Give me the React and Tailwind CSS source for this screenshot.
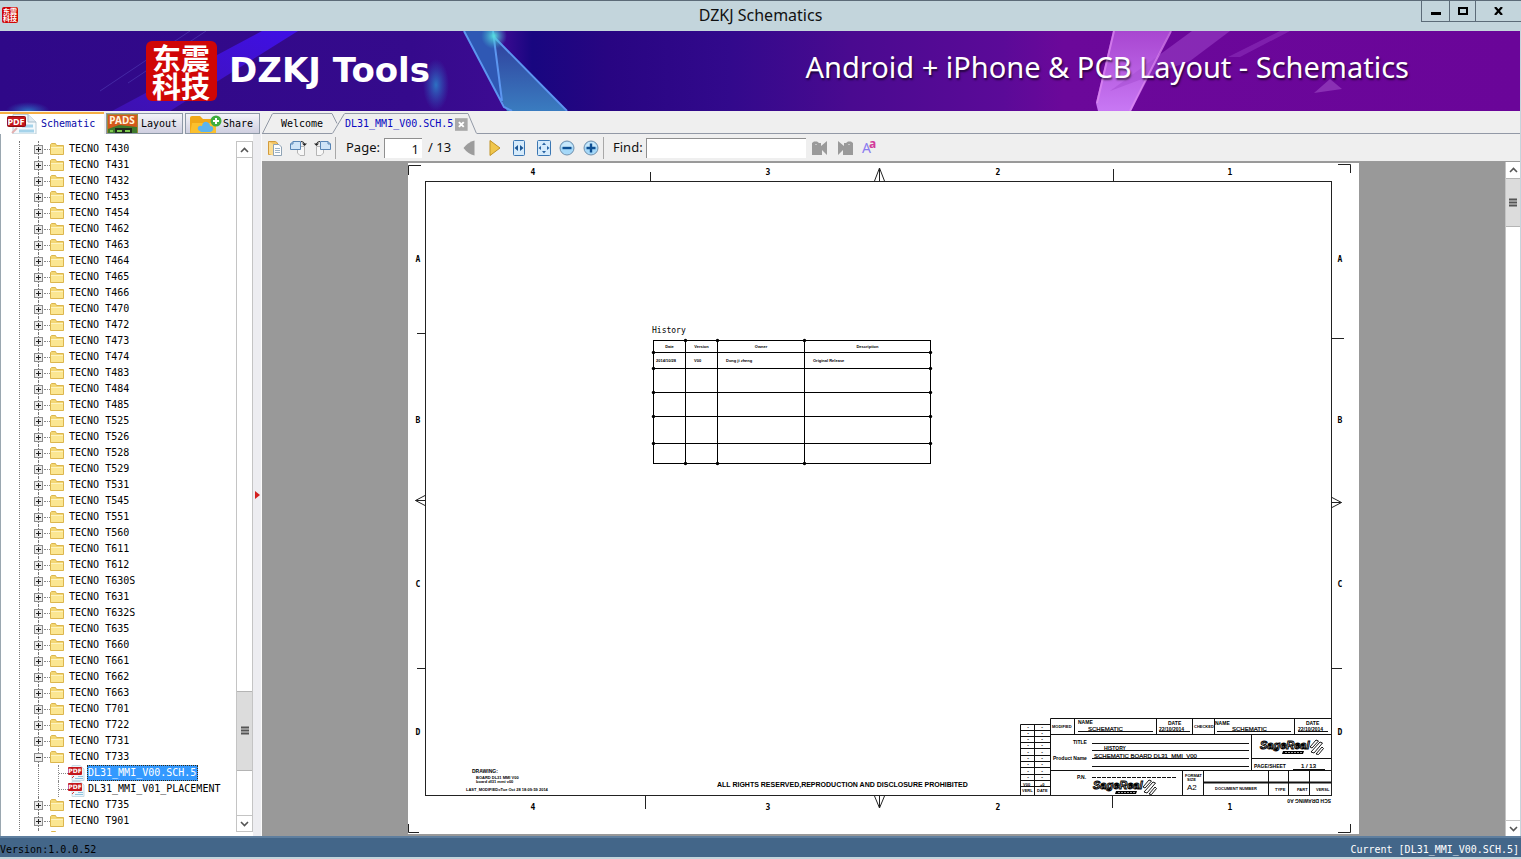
import React, { useState } from 'react';

const models = [
    'T430', 'T431', 'T432', 'T453', 'T454', 'T462', 'T463', 'T464', 'T465', 'T466', 'T470', 'T472', 'T473', 'T474',
    'T483', 'T484', 'T485', 'T525', 'T526', 'T528', 'T529', 'T531', 'T545', 'T551', 'T560', 'T611', 'T612', 'T630S',
    'T631', 'T632S', 'T635', 'T660', 'T661', 'T662', 'T663', 'T701', 'T722', 'T731', 'T733', 'T735', 'T901', '',
];

const files = ['DL31_MMI_V00.SCH.5', 'DL31_MMI_V01_PLACEMENT'];

/* ---------- Icons ---------- */

const FolderIcon = () => (
    <svg width="14" height="12" viewBox="0 0 14 12" className="shrink-0">
        <path d="M0.5 1.5 L1.5 0.5 H5.5 L6.5 2.5 H13.5 V11.5 H0.5 Z" fill="#f3d774" stroke="#dcb64e" />
        <path d="M1 4 H13 V11 H1 Z" fill="#fbe691" />
        <path d="M1 4.5 H13" stroke="#fdf3c0" />
    </svg>
);

const PdfIcon = () => (
    <svg width="17" height="16" viewBox="0 0 17 16" className="shrink-0">
        <path d="M4 0.5 H12 L16 4 V15.5 H4 Z" fill="#edf5fa" stroke="#c9dce6" />
        <path d="M7 13.5 H15 M10 11.5 H15" stroke="#8ec3df" />
        <path d="M4 13 L6 11" stroke="#d33" />
        <rect x="0" y="2" width="14" height="8" rx="1" fill="#c4161c" />
        <text x="7" y="8" textAnchor="middle" fontSize="6" fontWeight="700" fill="#fff" className="font-['DejaVu_Sans']">
            PDF
        </text>
    </svg>
);

const PdfTabIcon = () => (
    <svg width="32" height="20" viewBox="0 0 32 20" className="shrink-0">
        <path d="M7 0.5 H22 L30 8 V20 H7 Z" fill="#f4f9fc" stroke="#b9ced9" />
        <path d="M22 0.5 V8 H30" fill="#dfeaf1" stroke="#a9bfcb" />
        <path d="M16 12 H27 M13 17 H28" stroke="#a5d3ea" strokeWidth="3" />
        <path d="M6 19 L11 14" stroke="#e4b0b0" strokeWidth="2" />
        <rect x="1.5" y="2.5" width="18" height="10" rx="1" fill="#c4161c" stroke="#8d0d12" />
        <text x="10" y="11" textAnchor="middle" fontSize="9" fontWeight="700" fill="#fff" className="font-['Noto_Sans']">
            PDF
        </text>
    </svg>
);

const PadsIcon = () => (
    <svg width="31" height="20" viewBox="0 0 31 20" className="shrink-0">
        <rect x="0.5" y="0.5" width="30" height="20" fill="#d4581c" stroke="#9c8a3c" />
        <path d="M1 15 L12 11 L30 13 V20 H1 Z" fill="#3f7a2c" />
        <rect x="8" y="14" width="17" height="6" fill="#1f2a1c" />
        <path d="M10 17 H15 M18 17 H23 M3 17 H6" stroke="#7ec850" strokeWidth="2" />
        <text x="15" y="10" textAnchor="middle" fontSize="10" fontWeight="700" fill="#fff3dc" className="font-['Noto_Sans']">
            PADS
        </text>
    </svg>
);

const ShareIcon = () => (
    <svg width="32" height="20" viewBox="0 0 32 20" className="shrink-0">
        <path d="M0 4 Q0 2 2 2 H10 L13 5 H23 Q25 5 25 7 V20 H0 Z" fill="#f0a818" />
        <path d="M0 20 L2 9 H26 V20 Z" fill="#fbc02d" />
        <path d="M10 17 Q7 16 8 13 Q10 11 12 12 Q13 7 17 8 Q20 9 20 12 Q24 12 23 16 Q22 18 20 18 H11 Z" fill="#5db4ee" />
        <circle cx="26" cy="7" r="5.5" fill="#3fae3f" />
        <path d="M26 4 V10 M23 7 H29" stroke="#fff" strokeWidth="2" />
    </svg>
);

const OpenIcon = () => (
    <svg width="15" height="16" viewBox="0 0 15 16">
        <path d="M0.5 1.5 H7.5 L9.5 3 V14.5 H0.5 Z" fill="#f2c464" stroke="#d39b3a" />
        <path d="M1 2 L5 4 V15.5 L1 14 Z" fill="#fbdc92" />
        <path d="M5.5 4.5 H11 L13.5 7 V15.5 H5.5 Z" fill="#fdfdfd" stroke="#8fa3b5" />
        <path d="M7 8.5 H12 M7 10.5 H12 M7 12.5 H12" stroke="#9db4c8" />
    </svg>
);

const RotateIcon = ({ flip }) => (
    <svg width="17" height="16" viewBox="0 0 17 16">
        <g transform={flip ? 'translate(17 0) scale(-1 1)' : undefined}>
            <path d="M7.5 6.5 H14.5 V15.5 H10 L7.5 13 Z" fill="#f7f7f7" stroke="#b5b5b5" />
            <path d="M3 1.5 H10.5 V9.5 H0.5 V4 Z" fill="#cfe4f7" stroke="#5885b5" />
            <path d="M0.5 4 H3 V1.5" fill="none" stroke="#5885b5" />
            <path d="M11 1.5 Q14 1.5 14.5 4" fill="none" stroke="#222" />
            <path d="M12 3.5 H17 L14.5 6 Z" fill="#222" />
        </g>
    </svg>
);

const PrevIcon = () => (
    <svg width="12" height="16" viewBox="0 0 12 16">
        <path d="M11.5 0.5 V15.5 Q5 14 0.5 8 Q5 2 11.5 0.5 Z" fill="#9c9c9c" />
    </svg>
);

const NextIcon = () => (
    <svg width="12" height="16" viewBox="0 0 12 16">
        <path d="M1 0.5 V15.5 L11 8 Z" fill="#f0c64c" stroke="#c09225" />
    </svg>
);

const FitWidthIcon = () => (
    <svg width="12" height="16" viewBox="0 0 12 16">
        <rect x="0.5" y="0.5" width="11" height="15" rx="1" fill="#d6ebfb" stroke="#3b77b3" />
        <path d="M5 5 V11 L1.5 8 Z M7 5 V11 L10.5 8 Z" fill="#1c5796" />
    </svg>
);

const FitPageIcon = () => (
    <svg width="14" height="16" viewBox="0 0 14 16">
        <rect x="0.5" y="0.5" width="13" height="15" rx="1" fill="#d6ebfb" stroke="#3b77b3" />
        <path d="M5 5 H9 L7 2.5 Z M5 11 H9 L7 13.5 Z M4 6 V10 L1.5 8 Z M10 6 V10 L12.5 8 Z" fill="#2a65a4" />
    </svg>
);

const ZoomIcon = ({ plus }) => (
    <svg width="16" height="16" viewBox="0 0 16 16">
        <circle cx="8" cy="8" r="7" fill="#a5d8f8" stroke="#7391ad" />
        <path d="M2 7 Q4 2 8 2 Q12 2 14 7 Z" fill="#c8e8fb" />
        <path d={plus ? 'M3.5 8 H12.5 M8 3.5 V12.5' : 'M3.5 8 H12.5'} stroke="#0d4f93" strokeWidth="2.4" />
    </svg>
);

const FindIcon = ({ flip }) => (
    <svg width="16" height="16" viewBox="0 0 16 16">
        <g transform={flip ? 'translate(16 0) scale(-1 1)' : undefined}>
            <path d="M0 3 L2 1.5 H5 L7 3 H9 V6 L15 1 V15 L10 10 V15 H0 Z" fill="#9a9a9a" />
            <path d="M3 4.5 H5" stroke="#c4c4c4" />
        </g>
    </svg>
);

const Chevron = ({ down }) => (
    <svg width="9" height="6" viewBox="0 0 9 6">
        <path d={down ? 'M1 1 L4.5 4.5 L8 1' : 'M1 5 L4.5 1.5 L8 5'} fill="none" stroke="#555" strokeWidth="1.6" />
    </svg>
);

const Seal = ({ className }) => (
    <span className={`block break-all bg-[#d00606] text-white font-bold font-['Noto_Sans_CJK_SC',sans-serif] ${className}`}>
        东震科技
    </span>
);

/* ---------- Header ---------- */

const TitleBar = () => (
    <header className="relative h-[31px] shrink-0 border-t border-[#5c6b78] bg-[#c3d5dc] flex items-start justify-between">
        <Seal className="mt-[6px] ml-[2px] size-4 p-px rounded-xs text-[7px] leading-[7px]" />
        <h1 className="absolute inset-x-0 top-0 h-7 text-center text-[16px] leading-7 text-[#111] font-['Noto_Sans',sans-serif]">
            DZKJ Schematics
        </h1>
        <div className="relative flex h-[21px] border-l border-b border-[#5c6b78]">
            <button aria-label="Minimize" className="w-7 border-r border-[#5c6b78] grid place-items-center">
                <svg width="10" height="10" viewBox="0 0 10 10">
                    <path d="M0 7.5 H10" stroke="#000" strokeWidth="3" />
                </svg>
            </button>
            <button aria-label="Maximize" className="w-[26px] border-r border-[#5c6b78] grid place-items-center">
                <svg width="10" height="8" viewBox="0 0 10 8">
                    <rect x="1" y="1" width="8" height="6" fill="none" stroke="#000" strokeWidth="2" />
                </svg>
            </button>
            <button aria-label="Close" className="w-[45px] grid place-items-center">
                <svg width="9" height="8" viewBox="0 0 9 8">
                    <path d="M1 0 L8 8 M8 0 L1 8" stroke="#000" strokeWidth="2.2" />
                </svg>
            </button>
        </div>
    </header>
);

const Banner = () => (
    <div className="relative h-20 shrink-0 mr-px overflow-hidden bg-[#30088a]">
        <svg
            className="absolute inset-0 size-full"
            viewBox="0 0 1520 80"
            preserveAspectRatio="none"
            aria-hidden="true"
        >
            <defs>
                <linearGradient id="sky">
                    <stop offset="0" stopColor="#2f0888" />
                    <stop offset="0.27" stopColor="#350a8c" />
                    <stop offset="0.33" stopColor="#3c0b92" />
                    <stop offset="0.35" stopColor="#180680" />
                    <stop offset="0.4" stopColor="#280582" />
                    <stop offset="0.48" stopColor="#32098c" />
                    <stop offset="0.56" stopColor="#4a0a90" />
                    <stop offset="0.66" stopColor="#5b0a98" />
                    <stop offset="0.7" stopColor="#6b089a" />
                    <stop offset="1" stopColor="#6a0599" />
                </linearGradient>
                <linearGradient id="beam" x1="1" y1="0" x2="0" y2="1">
                    <stop offset="0" stopColor="#4010f0" stopOpacity="0.9" />
                    <stop offset="1" stopColor="#4a18d8" stopOpacity="0.5" />
                </linearGradient>
                <linearGradient id="shard" x1="0" y1="0" x2="0" y2="1">
                    <stop offset="0" stopColor="#2f3f9c" />
                    <stop offset="1" stopColor="#3a7cc0" />
                </linearGradient>
                <linearGradient id="pink" x1="0" y1="0" x2="0" y2="1">
                    <stop offset="0" stopColor="#a846d0" />
                    <stop offset="1" stopColor="#c878f4" />
                </linearGradient>
                <radialGradient id="glow">
                    <stop offset="0" stopColor="#2c7cc8" stopOpacity="0.9" />
                    <stop offset="1" stopColor="#2c60c0" stopOpacity="0" />
                </radialGradient>
                <radialGradient id="spark">
                    <stop offset="0" stopColor="#58e0e0" />
                    <stop offset="1" stopColor="#40b0d0" stopOpacity="0" />
                </radialGradient>
            </defs>
            <rect width="1520" height="80" fill="url(#sky)" />
            <path d="M262 0 H298 L170 80 H112 Z" fill="url(#beam)" />
            <path d="M206 0 L128 52 M190 0 L100 60" stroke="#5a48c0" strokeOpacity="0.5" />
            <ellipse cx="28" cy="80" rx="22" ry="9" fill="url(#glow)" />
            <ellipse cx="436" cy="54" rx="13" ry="26" fill="url(#glow)" />
            <path d="M464 0 H494 L501 68 L504 75 Z" fill="#2f58b4" />
            <path d="M494 6 L566 80 H507 L501 68 Z" fill="url(#shard)" />
            <path d="M464 0 L504 76 L512 80 M493 0 L502 70 M494 6 L567 80" fill="none" stroke="#5c96f0" strokeWidth="2" />
            <circle cx="494" cy="5" r="13" fill="url(#spark)" />
            <path d="M1113 0 H1170 L1131 80 H1098 L1096 72 Z" fill="url(#pink)" />
            <path d="M1192 0 H1230 L1190 30 L1110 60 Z" fill="#a44cd0" fillOpacity="0.5" />
            <path d="M1280 0 H1290 L1240 26 H1228 Z" fill="#a44cd0" fillOpacity="0.35" />
            <path d="M1114 0 L1097 72 M1171 0 L1130 80" stroke="#e08af4" strokeOpacity="0.7" strokeWidth="2" />
            <path d="M1330 48 L1342 58 L1314 62 Z" fill="#8a30b4" />
        </svg>
        <div className="relative h-full flex items-center justify-between pl-[146px] pr-[111px] text-white">
            <div className="flex items-center gap-3">
                <Seal className="w-[71px] h-[60px] px-[6px] py-[2px] rounded-md text-[29px] leading-7" />
                <span className="mb-[2px] text-[34px] leading-10 font-bold font-['DejaVu_Sans',sans-serif]">DZKJ Tools</span>
            </div>
            <span className="mb-2 text-[29px] leading-9 whitespace-nowrap font-['Noto_Sans',sans-serif] text-shadow-[1px_2px_2px_rgba(0,0,0,0.6)]">
                Android + iPhone &amp; PCB Layout - Schematics
            </span>
        </div>
    </div>
);

/* ---------- Left side ---------- */

const SideTabs = () => (
    <div className="h-[23px] shrink-0 flex items-end gap-[2px] bg-[#efeff2] leading-4" role="tablist">
        <button
            role="tab"
            aria-selected="true"
            className="h-[22px] w-[104px] border-t-2 border-[#f5ad42] bg-white pl-[6px] flex items-center gap-[3px] text-[#0808a8] overflow-hidden"
        >
            <PdfTabIcon />
            Schematic
        </button>
        <button
            role="tab"
            className="h-[21px] w-[77px] border border-[#8d98a6] bg-linear-to-b from-[#f4f4f8] to-[#cfcfe0] flex items-center gap-[3px] overflow-hidden"
        >
            <PadsIcon />
            Layout
        </button>
        <button
            role="tab"
            className="h-[21px] w-[75px] border border-[#8d98a6] bg-linear-to-b from-[#f4f4f8] to-[#cfcfe0] pl-1 flex items-center gap-px overflow-hidden"
        >
            <ShareIcon />
            Share
        </button>
    </div>
);

const TreeRow = ({ name, open }) => (
    <div className="flex h-4 items-center">
        <span className="mr-px h-4 w-[9px] shrink-0 flex flex-col items-center">
            <span className="h-1 border-l border-dotted border-[#777]" />
            <button
                aria-label={open ? 'Collapse' : 'Expand'}
                className="size-[9px] shrink-0 border border-[#8e8e8e] bg-[#ececec] grid place-items-center"
            >
                <svg width="5" height="5" viewBox="0 0 5 5">
                    <path d={open ? 'M0 2.5 H5' : 'M0 2.5 H5 M2.5 0 V5'} stroke="#222" />
                </svg>
            </button>
            <span className="h-[3px] border-l border-dotted border-[#777]" />
        </span>
        <span className="w-[6px] shrink-0 border-t border-dotted border-[#888]" />
        <FolderIcon />
        {name && <span className="ml-[5px]">TECNO {name}</span>}
    </div>
);

const Tree = () => {
    const [selected, setSelected] = useState(files[0]);
    return (
        <div className="h-full flex-1 overflow-hidden pl-[19px]">
            <ul className="border-l border-dotted border-[#777] pl-[14px] leading-4">
                {models.map((model, idx) => (
                    <li key={idx}>
                        <TreeRow name={model} open={model === 'T733'} />
                        {model === 'T733' && (
                            <ul className="ml-1 border-l border-dotted border-[#777] pl-[19px]">
                                {files.map((file) => (
                                    <li key={file} className="flex h-4 items-center">
                                        <span className="w-[10px] h-4 shrink-0 border-l border-dotted border-[#888] flex items-center">
                                            <span className="w-full border-t border-dotted border-[#888]" />
                                        </span>
                                        <PdfIcon />
                                        <button
                                            onClick={() => setSelected(file)}
                                            className={`ml-[2px] h-4 pr-px border whitespace-nowrap leading-[14px] ${
                                                file === selected
                                                    ? 'border-dotted border-[#3a2a10] bg-[#3399ff] text-white'
                                                    : 'border-transparent'
                                            }`}
                                        >
                                            {file}
                                        </button>
                                    </li>
                                ))}
                            </ul>
                        )}
                    </li>
                ))}
            </ul>
        </div>
    );
};

const Grip = () => (
    <svg width="8" height="9" viewBox="0 0 8 9">
        <path d="M0 1.5 H8 M0 4.5 H8 M0 7.5 H8" stroke="#555" strokeWidth="2" />
    </svg>
);

const Sidebar = () => (
    <aside className="w-[262px] shrink-0 flex flex-col bg-white">
        <SideTabs />
        <div className="flex-1 min-h-0 flex border-l border-[#9aa7b0]">
            <div className="flex flex-1 min-w-0 pt-[7px] pb-1">
                <div className="-ml-px flex flex-1 min-w-0">
                    <Tree />
                </div>
                <div className="w-[17px] shrink-0 flex flex-col border border-[#c4c4c4] bg-white">
                    <button aria-label="Scroll up" className="h-4 shrink-0 border-b border-[#c4c4c4] grid place-items-center">
                        <Chevron />
                    </button>
                    <div className="grow-[532]" />
                    <div className="h-20 border-y border-[#b4b4b4] bg-[#dcdcdc] grid place-items-center">
                        <Grip />
                    </div>
                    <div className="grow-[44]" />
                    <button aria-label="Scroll down" className="h-4 shrink-0 border-t border-[#c4c4c4] grid place-items-center">
                        <Chevron down />
                    </button>
                </div>
            </div>
            <div className="w-[9px] shrink-0 border-r border-[#fafafa] bg-[#ededf1] pt-5 grid place-items-center">
                <svg width="5" height="8" viewBox="0 0 5 8">
                    <path d="M0 0 L5 4 L0 8 Z" fill="#d42020" />
                </svg>
            </div>
        </div>
    </aside>
);

/* ---------- Document area ---------- */

const DocTabs = () => (
    <div className="h-[23px] shrink-0 flex items-end leading-4">
        <button className="h-[21px] flex">
            <svg width="11" height="21" viewBox="0 0 11 21">
                <path d="M0.5 20.5 L10.5 0.5 M0 20.5 H11" fill="none" stroke="#9299a6" />
            </svg>
            <span className="h-full w-[59px] border-y border-[#9299a6] pl-[8px] pt-[2px] text-left">Welcome</span>
        </button>
        <button className="h-[21px] flex text-[#0808c0]">
            <svg width="13" height="21" viewBox="0 0 13 21">
                <path d="M0.5 20.5 L12.5 0.5 M0 0.5 L5 10.5" fill="none" stroke="#9299a6" />
            </svg>
            <span className="h-full w-[123px] border-t border-[#9299a6] pt-[2px] flex items-start gap-[2px] whitespace-nowrap">
                DL31_MMI_V00.SCH.5
                <svg width="13" height="13" viewBox="0 0 13 13" className="mt-[2px]">
                    <rect width="13" height="13" fill="#a8a8a8" />
                    <path d="M4 4 L9 9 M9 4 L4 9" stroke="#fff" strokeWidth="2" />
                </svg>
            </span>
            <svg width="9" height="21" viewBox="0 0 9 21">
                <path d="M0 0.5 L8.5 20.5" fill="none" stroke="#9299a6" />
            </svg>
        </button>
        <span className="flex-1 border-b border-[#9299a6]" />
    </div>
);

const Separator = () => <span className="h-[22px] w-px bg-[#a8a8a8]" />;

const Toolbar = () => {
    const [page, setPage] = useState('1');
    return (
        <div className="h-7 shrink-0 border-b border-[#9a9a9a] pl-[6px] pt-px flex items-center text-[13px] text-[#111] font-['Noto_Sans',sans-serif]">
            <div className="flex items-center gap-[7px]">
                <button aria-label="Open">
                    <OpenIcon />
                </button>
                <button aria-label="Rotate right">
                    <RotateIcon />
                </button>
                <button aria-label="Rotate left">
                    <RotateIcon flip />
                </button>
            </div>
            <span className="w-1" />
            <Separator />
            <label htmlFor="page" className="w-12 pl-[10px]">
                Page:
            </label>
            <input
                id="page"
                value={page}
                onChange={(e) => setPage(e.target.value)}
                className="w-[38px] h-5 border-l border-t border-[#8f8f8f] bg-white text-right pr-[3px]"
            />
            <span className="w-[41px] pl-[6px] whitespace-nowrap">/ 13</span>
            <div className="flex items-center gap-[12px]">
                <button aria-label="Previous page" className="mr-[2px]">
                    <PrevIcon />
                </button>
                <button aria-label="Next page">
                    <NextIcon />
                </button>
                <button aria-label="Fit width">
                    <FitWidthIcon />
                </button>
                <button aria-label="Fit page">
                    <FitPageIcon />
                </button>
            </div>
            <div className="flex items-center gap-2 pl-2 pr-1">
                <button aria-label="Zoom out">
                    <ZoomIcon />
                </button>
                <button aria-label="Zoom in">
                    <ZoomIcon plus />
                </button>
            </div>
            <Separator />
            <label htmlFor="find" className="w-[42px] pl-[9px]">
                Find:
            </label>
            <input id="find" className="w-40 h-5 border-l border-t border-[#8f8f8f] bg-white" />
            <div className="flex items-center gap-[9px] pl-[6px]">
                <button aria-label="Find previous">
                    <FindIcon />
                </button>
                <button aria-label="Find next">
                    <FindIcon flip />
                </button>
                <button aria-label="Match case" className="relative h-5 w-4 text-left text-[14px] leading-5 text-[#8a7cf0]">
                    A<span className="absolute left-[7px] -top-1 text-[12px] font-bold text-[#d23a9a]">a</span>
                </button>
            </div>
        </div>
    );
};

const zones = [
    { label: '4', x: 533 },
    { label: '3', x: 768 },
    { label: '2', x: 998 },
    { label: '1', x: 1230 },
];

const bands = [
    { label: 'A', y: 262 },
    { label: 'B', y: 423 },
    { label: 'C', y: 587 },
    { label: 'D', y: 735 },
];

const revisionRows = [731, 737, 743, 749, 756, 762, 768, 775, 781, 787];

// maker's logo, used twice in the title block
const MakerLogo = ({ x, y }) => (
    <g transform={`translate(${x} ${y})`}>
        <text x="0" y="10" fontSize="11" fontWeight="700" fontStyle="italic" fill="#fff" stroke="#000" strokeWidth="1">
            SageReal
        </text>
        <path d="M22 15 L23 12 H44 L43 15 Z" fill="#000" />
        <path d="M25 13.5 H42" stroke="#fff" strokeWidth="0.6" strokeDasharray="2 1" />
        <path
            d="M50 8 L56 1 L58.5 2 L52 9 Z M51 13 L60 3 L62.5 4 L54 14 Z M56 15 L62 8 L63.5 9.5 L58.5 15.5 Z"
            fill="#fff"
            stroke="#000"
            strokeWidth="0.9"
        />
    </g>
);

const SheetDrawing = () => (
    <svg
        width="951"
        height="671"
        viewBox="408 163 951 671"
        className="block font-['Liberation_Sans',sans-serif]"
        fill="#000"
        fontSize="6"
    >
        {/* frame, crop marks and centre arrows */}
        <g fill="none" stroke="#222">
            <rect x="425.5" y="181.5" width="906" height="614" />
            <path d="M408.5 175 V165.5 H421 M1338 164.5 H1350.5 V173 M408.5 824 V832.5 H419 M1338 832.5 H1350.5 V824" />
            <path d="M650.5 172 V181 M1113.5 169 V181 M645.5 796 V809 M1112.5 796 V808" />
            <path d="M417 333.5 H425 M417 668.5 H425 M1332 338.5 H1344 M1332 668.5 H1342" />
            <path d="M874.5 181 L879.5 168 L884.5 181 M879.5 168 V181 M874.5 796 L879.5 808 L884.5 796 M879.5 808 V796" />
            <path d="M425 495.5 L415.5 500.5 L425 505.5 M415.5 500.5 H425 M1332 497.5 L1341.5 502.5 L1332 507.5 M1341.5 502.5 H1332" />
        </g>

        <g fontSize="8" fontWeight="700" textAnchor="middle" className="font-['DejaVu_Sans_Mono',monospace]">
            {zones.map((z) => (
                <React.Fragment key={z.label}>
                    <text x={z.x} y="175">{z.label}</text>
                    <text x={z.x} y="810">{z.label}</text>
                </React.Fragment>
            ))}
            {bands.map((b) => (
                <React.Fragment key={b.label}>
                    <text x="418" y={b.y}>{b.label}</text>
                    <text x="1340" y={b.y}>{b.label}</text>
                </React.Fragment>
            ))}
        </g>

        {/* notes */}
        <text x="472" y="773" fontSize="5" fontWeight="700">DRAWING:</text>
        <g fontSize="4" fontWeight="700">
            <text x="476" y="779">BOARD DL31 MMI V00</text>
            <text x="476" y="783">board dl31 mmi v00</text>
            <text x="466" y="791">LAST_MODIFIED=Tue Oct 28 18:09:59 2014</text>
        </g>
        <text x="717" y="787" fontSize="7" fontWeight="700">
            ALL RIGHTS RESERVED,REPRODUCTION AND DISCLOSURE PROHIBITED
        </text>

        {/* title block */}
        <g fill="none" stroke="#111">
            <path d="M1331 718.5 H1050.5 V795 M1051 734.5 H1331 M1051 770.5 H1331" />
            <path d="M1074.5 719 V734 M1156.5 719 V734 M1192.5 719 V734 M1214.5 719 V734 M1294.5 719 V734" />
            <path d="M1251.5 735 V770 M1251.5 758.5 H1331 M1182.5 771 V795 M1203.5 771 V795 M1268.5 771 V795 M1288.5 771 V795 M1309.5 771 V795" />
            <path d="M1078 731.5 H1153 M1159 731.5 H1190 M1217 731.5 H1291 M1298 731.5 H1328 M1293 769.5 H1325" />
            <path d="M1092 743.5 H1249 M1092 750.5 H1249 M1092 758.5 H1249 M1092 766.5 H1249" />
            <path d="M1092 777.5 H1177" strokeDasharray="4 1" />
            <path d="M1204 782.5 H1331" strokeWidth="2" />
            <path d="M1050 724.5 H1020.5 V795 M1034.5 725 V795" />
            {revisionRows.map((y) => (
                <path key={y} d={`M1020 ${y - 0.5} H1050`} />
            ))}
        </g>
        <g fontSize="5" fontWeight="700" textAnchor="middle">
            {revisionRows.slice(0, 9).map((y) => (
                <React.Fragment key={y}>
                    <text x="1028" y={y - 2}>-</text>
                    <text x="1042" y={y - 2}>-</text>
                </React.Fragment>
            ))}
        </g>
        <g fontSize="4" fontWeight="700">
            <text x="1023" y="786">V00</text>
            <text x="1040" y="786">+0</text>
            <text x="1022" y="792">VERL</text>
            <text x="1037" y="792">DATE</text>
            <text x="1052" y="728">MODIFIED</text>
            <text x="1194" y="728">CHECKED</text>
            <text x="1185" y="777">FORMAT</text>
            <text x="1187" y="781">SIZE</text>
            <text x="1215" y="790">DOCUMENT NUMBER</text>
            <text x="1275" y="791">TYPE</text>
            <text x="1297" y="791">PART</text>
            <text x="1316" y="791">VERSL</text>
        </g>
        <g fontSize="5" fontWeight="700">
            <text x="1078" y="724">NAME</text>
            <text x="1215" y="725">NAME</text>
            <text x="1168" y="725">DATE</text>
            <text x="1306" y="725">DATE</text>
            <text x="1073" y="744">TITLE</text>
            <text x="1053" y="760">Product Name</text>
            <text x="1077" y="779">P.N.</text>
            <text x="1254" y="768">PAGE/SHEET</text>
            <text x="1159" y="731">22/10/2014</text>
            <text x="1298" y="731">22/10/2014</text>
            <text x="1104" y="750">HISTORY</text>
            <text transform="translate(1331 799) rotate(180)">SCH DRAWING A0</text>
        </g>
        <g fontSize="6" stroke="#000" strokeWidth="0.2">
            <text x="1088" y="731">SCHEMATIC</text>
            <text x="1232" y="731">SCHEMATIC</text>
            <text x="1094" y="758">SCHEMATIC BOARD DL31_MMI_V00</text>
            <text x="1301" y="768">1 / 13</text>
        </g>
        <text x="1187" y="790" fontSize="8">A2</text>
        <MakerLogo x={1260} y={739} />
        <MakerLogo x={1093} y={779} />
    </svg>
);

const history = [
    { date: '2014/10/28', version: 'V00', owner: 'Dong ji zheng', text: 'Original Release', height: 'h-4' },
    { height: 'h-6' },
    { height: 'h-6' },
    { height: 'h-[27px]' },
    { height: 'h-5' },
];

const historyDots = [
    [32, 0], [64, 0], [151, 0], [0, 12], [277, 12], [0, 28], [277, 28], [0, 52],
    [277, 52], [0, 76], [277, 76], [0, 103], [277, 103], [32, 123], [64, 123], [151, 123],
];

const HistoryTable = () => (
    <div className="absolute left-[245px] top-[177px]">
        <table className="w-[278px] table-fixed border-separate border-spacing-0 border-l border-t border-black text-[4px] leading-[4px] font-bold font-['Liberation_Sans',sans-serif] [&_th]:border-r [&_th]:border-b [&_td]:border-r [&_td]:border-b [&_th]:p-0 [&_td]:py-0">
            <caption className="absolute -left-px -top-[15px] text-[8px] leading-3 font-normal font-['DejaVu_Sans_Mono',monospace]">
                History
            </caption>
            <thead>
                <tr className="h-3">
                    <th className="w-8">Date</th>
                    <th className="w-8">Version</th>
                    <th className="w-[87px]">Owner</th>
                    <th>Description</th>
                </tr>
            </thead>
            <tbody>
                {history.map((row, idx) => (
                    <tr key={idx} className={row.height}>
                        <td className="pl-[2px]">{row.date}</td>
                        <td className="pl-2">{row.version}</td>
                        <td className="pl-2">{row.owner}</td>
                        <td className="pl-2">{row.text}</td>
                    </tr>
                ))}
            </tbody>
        </table>
        {/* junction dots */}
        <svg width="278" height="124" className="absolute left-0 top-0 overflow-visible">
            {historyDots.map(([x, y]) => (
                <circle key={`${x}-${y}`} cx={x + 0.5} cy={y + 0.5} r="1.7" />
            ))}
        </svg>
    </div>
);

const Viewer = () => (
    <div className="flex-1 min-h-0 flex">
        <div className="flex-1 min-w-0 bg-[#999999] overflow-hidden pt-px flex justify-center items-start">
            <div className="relative shrink-0 bg-white">
                <SheetDrawing />
                <HistoryTable />
            </div>
        </div>
        <div className="w-[15px] shrink-0 flex flex-col bg-white border-l border-[#c4c4c4]">
            <button aria-label="Scroll up" className="h-4 shrink-0 grid place-items-center">
                <Chevron />
            </button>
            <div className="h-[49px] shrink-0 border-y border-[#b4b4b4] bg-[#dcdcdc] grid place-items-center">
                <Grip />
            </div>
            <div className="flex-1" />
            <button aria-label="Scroll down" className="h-4 shrink-0 border-t border-[#c4c4c4] grid place-items-center">
                <Chevron down />
            </button>
        </div>
    </div>
);

const App = () => {
    return (
        <div className="h-screen flex flex-col overflow-hidden bg-[#c3d5dc] text-[10px] text-black font-['DejaVu_Sans_Mono',monospace]">
            <TitleBar />
            <Banner />
            <main className="flex-1 min-h-0 flex mr-px">
                <Sidebar />
                <section className="flex-1 min-w-0 flex flex-col bg-[#efefef]">
                    <DocTabs />
                    <Toolbar />
                    <Viewer />
                </section>
            </main>
            <footer className="h-[23px] shrink-0 border-t-2 border-b-2 border-t-[#5f7f9f] border-b-[#c3d5dc] bg-[#436689] pt-[3px] pr-[2px] flex items-center justify-between">
                <span>Version:1.0.0.52</span>
                <span className="text-white">Current [DL31_MMI_V00.SCH.5]</span>
            </footer>
        </div>
    );
};

export default App;
